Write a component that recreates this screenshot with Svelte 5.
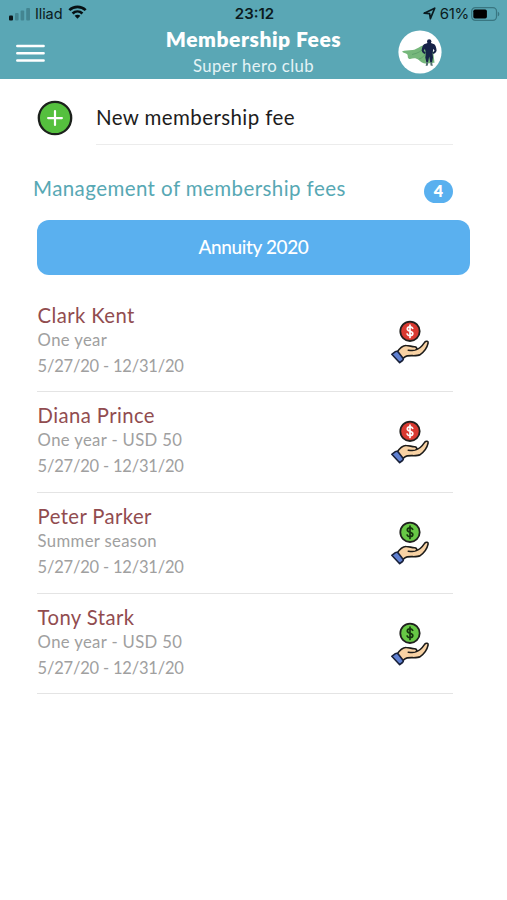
<script>
  const members = [
    { name: 'Clark Kent', plan: 'One year', paid: false },
    { name: 'Diana Prince', plan: 'One year - USD 50', paid: false },
    { name: 'Peter Parker', plan: 'Summer season', paid: true },
    { name: 'Tony Stark', plan: 'One year - USD 50', paid: true }
  ];
  const period = '5/27/20 - 12/31/20';
</script>

<div class="screen">
  <header>
    <div class="status">
      <div class="carrier">
        <svg width="22" height="14" viewBox="0 0 22 14">
          <rect x="0" y="8.5" width="4" height="5" rx="1" fill="#0b1518" />
          <rect x="6" y="6" width="3.6" height="7.5" rx="1" fill="#438591" />
          <rect x="11.6" y="3.5" width="3.6" height="10" rx="1" fill="#438591" />
          <rect x="17.2" y="1" width="3.8" height="12.5" rx="1" fill="#438591" />
        </svg>
        <span class="net">Iliad</span>
        <svg class="wifi" width="19" height="14.500" viewBox="0 0 20 15" fill="none" stroke="#061013" stroke-width="2.8">
          <path d="M1.4 5.3C6.2.7 13.8.7 18.6 5.3" />
          <path d="M4.8 8.8c3-2.8 7.4-2.8 10.4 0" />
          <path d="M7 11.200c1.800-1.500 4.200-1.500 6 0L10 14.300Z" fill="#061013" stroke="none" />
        </svg>
      </div>
      <span class="clock">23:12</span>
      <div class="power">
        <svg width="13" height="13" viewBox="0 0 13 13" fill="none" stroke="#0b1b20" stroke-width="1.7" stroke-linejoin="round">
          <path d="M1.200 6.200 11.700 1.200 7.400 11.600 6.600 6.600Z" />
        </svg>
        <span class="pct">61%</span>
        <svg width="29" height="14" viewBox="0 0 29 14">
          <rect x=".7" y=".7" width="24.800" height="12.600" rx="3.600" fill="none" stroke="#397681" stroke-width="1.200" />
          <rect x="2.300" y="2.500" width="13.600" height="9" rx="1.700" fill="#000" />
          <path d="M26.800 4.700c2 .7 2 3.900 0 4.600Z" fill="#397681" />
        </svg>
      </div>
    </div>
    <div class="bar">
      <svg class="menu" width="29" height="19" viewBox="0 0 29 19" stroke="#fff" stroke-width="2.500" stroke-linecap="round">
        <path d="M1.300 2H27.600M1.300 9.200H27.600M1.300 16.400H27.600" />
      </svg>
      <div class="titles">
        <h1>Membership Fees</h1>
        <p>Super hero club</p>
      </div>
      <svg class="avatar" width="44" height="44" viewBox="0 0 44 44">
        <circle cx="22" cy="22" r="21.600" fill="#fff" />
        <path d="M28 14.800c-6 .8-8.500 4.600-13.500 5.300-4.200.6-8-.1-10.500 1.500 1.200 1.600 3.800 1.400 5.200 2.700 1.200 1.500-.2 3.100 1.600 4.400 2.300.8 4.600-1.200 7.700.1 3.400 1.400 4.700 4.500 8.700 4.700 3.100.2 5.800-1 9.300-.8L34.500 16Z" fill="#76b77b" />
        <path d="M27 17.200c-3 3.400-6.800 6.200-13 7.300M28 22c-1 4-4 6-7 7" stroke="#5a9c68" stroke-width=".8" fill="none" />
        <circle cx="31.200" cy="11.400" r="2.200" fill="#172348" />
        <path d="M29.600 13h3.300l3.400 1.300c1.200.7 2.200 4.200 2.300 6.100.1 1.500-2.100 3-3.200 3.600l-.9-1.300 2-2-1.200-1.900-.8 4.200.5 4.500-.9 4.500h-1.900l-1-5.600-1.100 5.600h-1.800l-1-4.500.6-4.500-1-4.200-1.200 1.900 2 2-.9 1.300c-1.100-.6-3.200-2.100-3.100-3.600.1-1.900 1.100-5.400 2.400-6.100Z" fill="#172348" />
        <path d="M28.300 32h1.800l-.2 3.500-2.200.6ZM32.300 32h1.800l.6 4.100-2.200-.6Z" fill="#526e70" />
      </svg>
    </div>
  </header>

  <main>
    <div class="new">
      <svg width="36" height="36" viewBox="0 0 36 36">
        <circle cx="18" cy="18" r="16.200" fill="#55c03e" stroke="#1c211c" stroke-width="2.300" />
        <path d="M18 11.200V25M11.100 18.100H24.900" stroke="#fff" stroke-width="2.200" stroke-linecap="round" />
      </svg>
      <div class="label">New membership fee</div>
    </div>

    <div class="section">
      <h2>Management of membership fees</h2>
      <span class="badge">4</span>
    </div>

    <button>Annuity 2020</button>

    <ul>
      {#each members as m}
        <li>
          <div class="info">
            <div class="name">{m.name}</div>
            <div class="plan">{m.plan}</div>
            <div class="date">{period}</div>
          </div>
          <svg class="fee" width="40" height="44" viewBox="0 0 40 44" stroke-linejoin="round" stroke-linecap="round">
            <circle cx="20" cy="11.300" r="9.700" fill={m.paid ? '#67c845' : '#d93a31'} stroke="#20201f" stroke-width="1.800" />
            <path d="M22.700 8.300c-.6-1.100-1.500-1.400-2.700-1.400-1.600 0-2.700.8-2.700 2.100 0 3 5.500 1.500 5.500 4.500 0 1.400-1.200 2.200-2.800 2.200-1.400 0-2.400-.6-2.900-1.700M20 5.200v12.200" fill="none" stroke={m.paid ? '#15330e' : '#fff'} stroke-width="1.700" />
            <path d="M6.800 32.500c3-4.500 6.300-7.200 9.400-7 3.100.1 5.700 1.200 8.300 1.200 1.900 0 2.500 1.300 2 2.700 3.400-.7 5.700-3.500 8.300-7.300 1.400-1.600 3.800-.9 3.300 1.100-.8 3.600-4.100 8.900-8.200 11.600-2.700 1.600-8.800.4-12.700 1.100-2 .4-3.400 1.800-5 3.200Z" fill="#f8d2a4" stroke="#1d1c1a" stroke-width="1.600" />
            <path d="M18.200 30.200c2.800.4 7.400.3 8.300-.8" fill="none" stroke="#1d1c1a" stroke-width="1.500" />
            <path d="M1.800 34.300 5.400 31.600Q7 30.700 8.200 32.100L13 38.300Q13.800 39.500 12.500 40.500L9.700 42.700Z" fill="#5f80d1" stroke="#182039" stroke-width="1.600" />
          </svg>
        </li>
      {/each}
    </ul>
  </main>
</div>

<style>
  :global(body) { margin: 0; background: #fff; }
  .screen { width: 507px; height: 900px; overflow: hidden; background: #fff; font-family: Lato, "Open Sans", sans-serif; }
  header { height: 79px; background: #5aa7b5; box-sizing: border-box; }
  .status { height: 27px; padding: 0 7px 0 9px; display: grid; grid-template-columns: 1fr auto 1fr; align-items: center; font-family: Inter, sans-serif; color: #0b1b20; }
  .carrier, .power { display: flex; align-items: center; }
  .power { justify-content: flex-end; }
  .net { font-size: 14.500px; line-height: 27px; margin-left: 4px; letter-spacing: -.1px; }
  .wifi { margin-left: 6px; margin-top: -2px; }
  .clock { font-size: 15px; font-weight: 600; letter-spacing: 0; line-height: 27px; }
  .pct { font-size: 15px; margin: 0 2px 0 4px; letter-spacing: -.3px; }
  .bar { height: 52px; display: grid; grid-template-columns: 120px 1fr 120px; }
  .menu { margin: 17px 0 0 16px; }
  .titles { text-align: center; color: #fff; white-space: nowrap; }
  h1 { margin: -1px 0 0; font-size: 21px; line-height: 26px; font-weight: 800; letter-spacing: .55px; }
  p { margin: 0; padding-top: 1px; font-size: 16.700px; line-height: 26px; letter-spacing: .45px; color: #e4f3f5; }
  .avatar { margin: 3px 0 0 11px; }
  main { padding: 0 37px; }
  .new { display: flex; height: 66px; }
  .new svg { margin-top: 21px; }
  .label { margin-left: 23px; width: 357px; box-sizing: border-box; border-bottom: 1px solid #ececec; padding-top: 23px; font-size: 20.500px; line-height: 30px; letter-spacing: .4px; color: #1d1d1d; }
  .section { height: 75px; margin-left: -4px; display: flex; justify-content: space-between; align-items: flex-start; padding-right: 17px; }
  h2 { margin: 28px 0 0; font-size: 20.500px; line-height: 30px; font-weight: 400; letter-spacing: .42px; color: #57a8b4; white-space: nowrap; }
  .badge { margin-top: 35px; width: 29px; height: 23px; border-radius: 12px; background: #59b0ef; color: #fff; font-size: 16px; line-height: 22px; font-weight: 800; text-align: center; }
  button { display: block; margin: 0; width: 433px; height: 55px; border: 0; border-radius: 12px; background: #5ab0ef; color: #fff; font: 500 19px/53px Lato, sans-serif; letter-spacing: -.4px; padding: 0 0 2px; }
  ul { list-style: none; margin: 16.600px 0 0; padding: 0; width: 416px; }
  li { height: 100.670px; box-sizing: border-box; border-bottom: 1px solid #e4e4e4; display: flex; justify-content: space-between; }
  .info { padding: 9px 0 0 .6px; white-space: nowrap; }
  .name { font-size: 20.300px; line-height: 28px; color: #914c4f; letter-spacing: .4px; }
  .plan { font-size: 16.700px; line-height: 22px; color: #a0a0a0; letter-spacing: .35px; }
  .date { font-size: 16.500px; line-height: 31px; color: #a0a0a0; letter-spacing: -.2px; }
  .fee { margin: 28px 23px 0 0; }
</style>
